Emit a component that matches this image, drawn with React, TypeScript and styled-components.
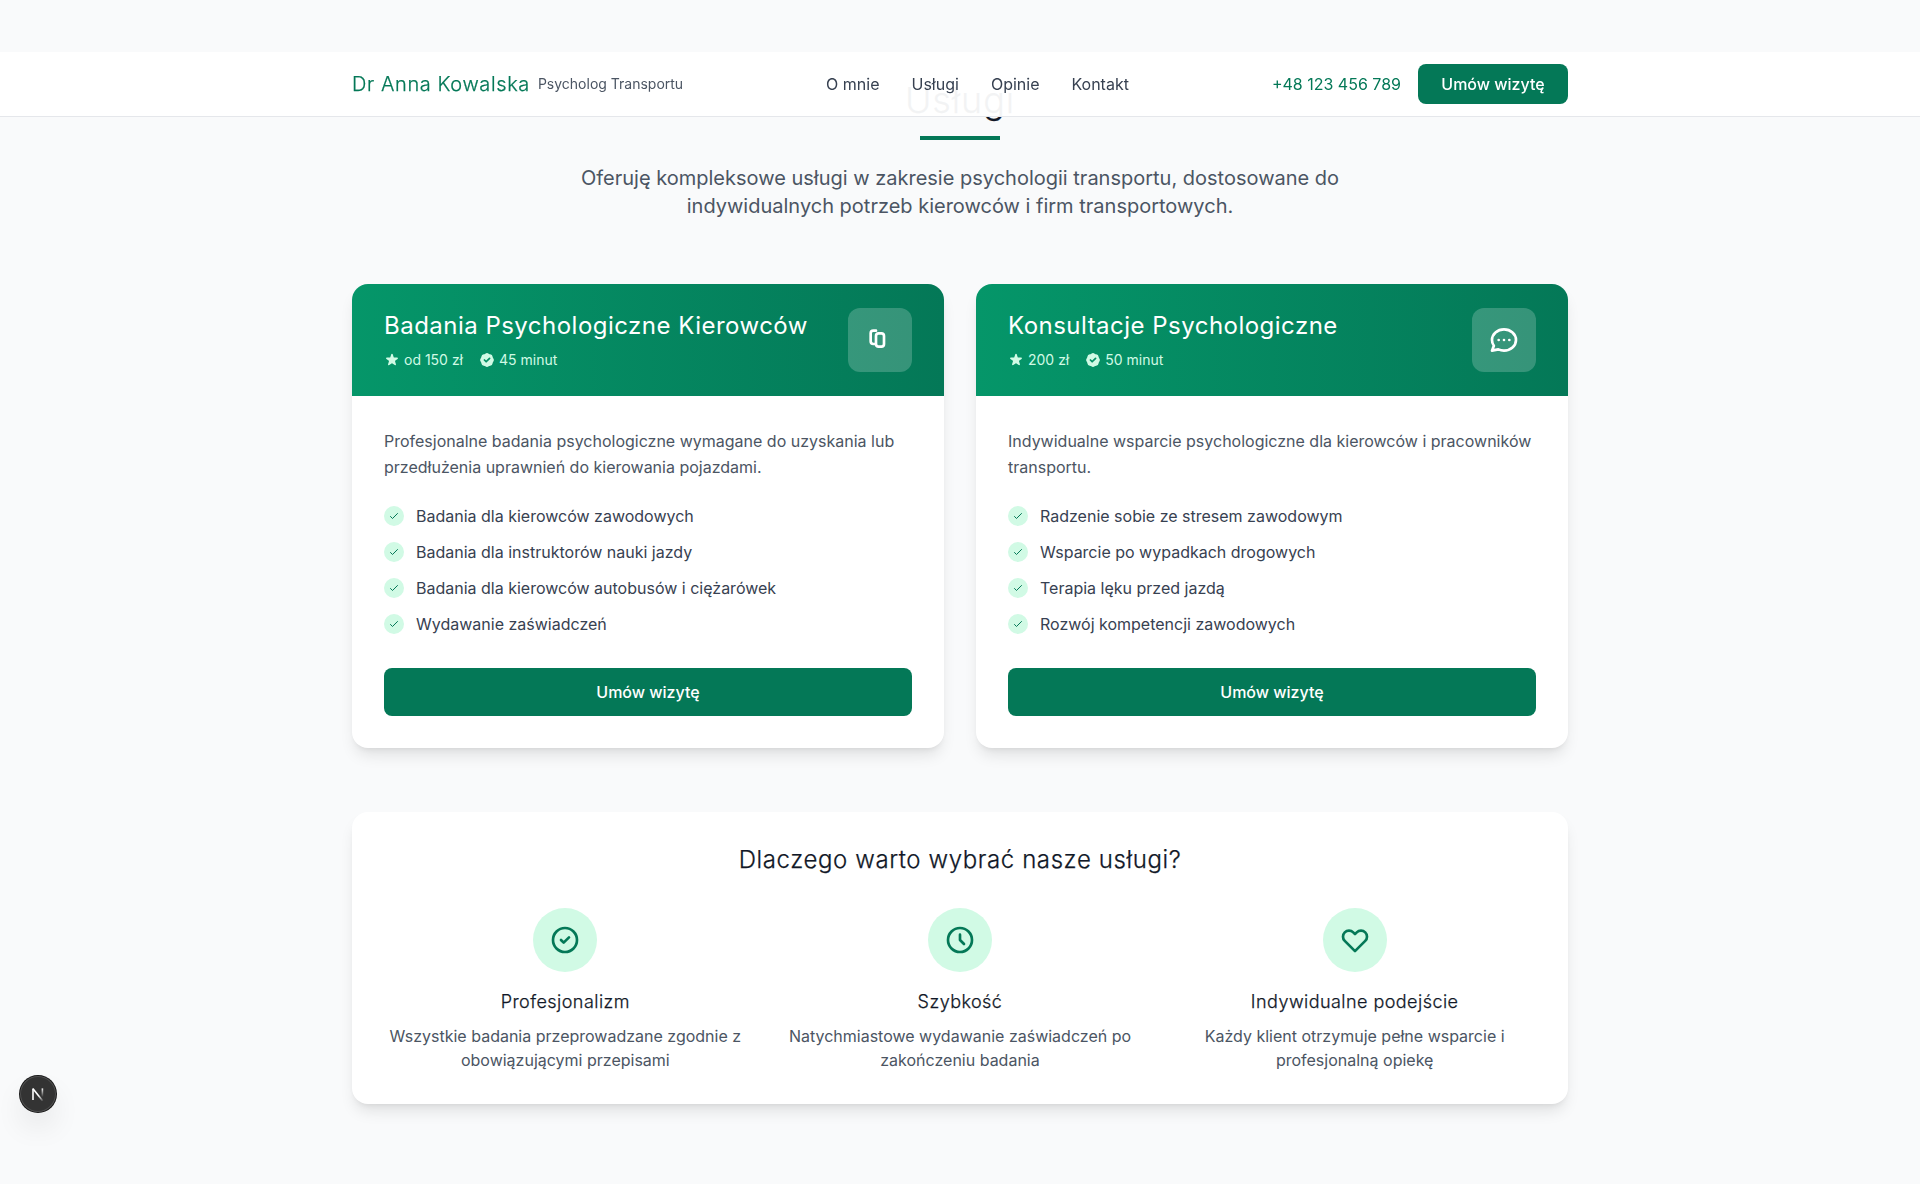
import React from 'react';
import styled, { createGlobalStyle, css } from 'styled-components';

const GlobalStyle = createGlobalStyle`
  *, *::before, *::after { box-sizing: border-box; }
  body {
    margin: 0;
    background: #f9fafb;
    color: #111827;
    font-family: Inter, 'Noto Sans', sans-serif;
    font-size: 16px;
    line-height: 24px;
    overflow: hidden;
  }
  h1, h2, h3, h4, p, ul { margin: 0; padding: 0; font-weight: 400; }
  ul { list-style: none; }
  a { text-decoration: none; color: inherit; }
  svg { display: block; flex-shrink: 0; }
`;

const lightHeading = css`
  font-weight: 300;
  letter-spacing: 0.025em;
  -webkit-text-stroke: 0.25px currentColor;
`;

const Page = styled.div`
  min-height: 1184px;
  padding-top: 80px;
`;

const Container = styled.div`
  width: 1216px;
  margin: 0 auto;
`;

const Header = styled.header`
  position: fixed;
  top: 52px;
  left: 0;
  right: 0;
  z-index: 10;
  background: rgba(255, 255, 255, 0.95);
  border-bottom: 1px solid #e5e7eb;
`;

const HeaderRow = styled(Container)`
  display: flex;
  align-items: center;
  justify-content: space-between;
  height: 64px;
`;

const Brand = styled.a`
  display: flex;
  align-items: center;
  gap: 8px;
`;

const BrandName = styled.span`
  ${lightHeading}
  font-size: 20px;
  line-height: 28px;
  letter-spacing: 0.03em;
  color: #047857;
`;

const BrandRole = styled.span`
  font-size: 14px;
  line-height: 20px;
  color: #4b5563;
`;

const Nav = styled.nav`
  display: flex;
  gap: 32px;
  color: #374151;
`;

const HeaderActions = styled.div`
  display: flex;
  align-items: center;
  gap: 17px;
`;

const Phone = styled.a`
  color: #047857;
`;

const Button = styled.button<{ $wide?: boolean }>`
  display: block;
  width: ${(p) => (p.$wide ? '100%' : '150px')};
  padding: ${(p) => (p.$wide ? '12px 0' : '8px 0')};
  border: 0;
  border-radius: 8px;
  background: #047857;
  color: #fff;
  font: 500 16px/24px Inter, 'Noto Sans', sans-serif;
`;

const Intro = styled.div`
  display: flex;
  flex-direction: column;
  align-items: center;
  margin-bottom: 64px;
  text-align: center;
`;

const SectionTitle = styled.h2`
  ${lightHeading}
  font-size: 36px;
  line-height: 40px;
`;

const Rule = styled.div`
  width: 80px;
  height: 4px;
  margin: 16px 0 24px;
  background: #047857;
`;

const Lead = styled.p`
  max-width: 768px;
  font-size: 20px;
  line-height: 28px;
  color: #4b5563;
`;

const CardGrid = styled.div`
  display: grid;
  grid-template-columns: repeat(2, 1fr);
  gap: 32px;
  margin-bottom: 64px;
`;

const Panel = styled.div`
  border-radius: 16px;
  background: #fff;
  box-shadow: 0 10px 15px -3px rgba(0, 0, 0, 0.1), 0 4px 6px -4px rgba(0, 0, 0, 0.1);
`;

const Card = styled(Panel)`
  overflow: hidden;
`;

const CardHead = styled.div`
  display: flex;
  align-items: center;
  justify-content: space-between;
  padding: 24px 32px;
  background: linear-gradient(to right, #059669, #047857);
`;

const CardTitle = styled.h3`
  margin-bottom: 8px;
  font-size: 24px;
  line-height: 32px;
  letter-spacing: 0.02em;
  color: #fff;
`;

const MetaRow = styled.div`
  display: flex;
  gap: 16px;
  font-size: 14px;
  line-height: 20px;
  color: #d1fae5;
`;

const Meta = styled.span`
  display: flex;
  align-items: center;
  gap: 4px;
`;

const IconTile = styled.div`
  display: flex;
  align-items: center;
  justify-content: center;
  width: 64px;
  height: 64px;
  border-radius: 12px;
  background: rgba(255, 255, 255, 0.2);
  color: #fff;
`;

const CardBody = styled.div`
  padding: 32px;
`;

const Description = styled.p`
  margin-bottom: 24px;
  line-height: 26px;
  color: #4b5563;
`;

const FeatureList = styled.ul`
  display: flex;
  flex-direction: column;
  gap: 12px;
  margin-bottom: 32px;
`;

const Feature = styled.li`
  display: flex;
  align-items: center;
  gap: 12px;
  color: #374151;
`;

const Tick = styled.span`
  display: flex;
  align-items: center;
  justify-content: center;
  width: 20px;
  height: 20px;
  border-radius: 50%;
  background: #d1fae5;
  color: #047857;
`;

const WhyPanel = styled(Panel)`
  padding: 32px;
  text-align: center;
`;

const WhyTitle = styled.h3`
  ${lightHeading}
  margin-bottom: 32px;
  font-size: 24px;
  line-height: 32px;
`;

const WhyGrid = styled.div`
  display: grid;
  grid-template-columns: repeat(3, 1fr);
  gap: 32px;
`;

const Reason = styled.div`
  display: flex;
  flex-direction: column;
  align-items: center;
`;

const ReasonIcon = styled.div`
  display: flex;
  align-items: center;
  justify-content: center;
  width: 64px;
  height: 64px;
  margin-bottom: 16px;
  border-radius: 50%;
  background: #d1fae5;
  color: #047857;
`;

const ReasonTitle = styled.h4`
  ${lightHeading}
  margin-bottom: 8px;
  font-size: 18px;
  line-height: 28px;
`;

const ReasonText = styled.p`
  color: #4b5563;
`;

const DevBadge = styled.div`
  position: fixed;
  left: 20px;
  top: 1076px;
  display: flex;
  align-items: center;
  justify-content: center;
  width: 36px;
  height: 36px;
  border-radius: 50%;
  background: #333;
  box-shadow: 0 0 0 1px #171717, inset 0 0 0 1px rgba(255, 255, 255, 0.14),
    0 16px 32px -8px rgba(0, 0, 0, 0.24);
`;

const OutlineIcon = ({ d, size = 32 }: { d: string; size?: number }) => (
  <svg width={size} height={size} viewBox="0 0 24 24" fill="none" stroke="currentColor" strokeWidth="2" strokeLinecap="round" strokeLinejoin="round">
    <path d={d} />
  </svg>
);

const SolidIcon = ({ d, viewBox = '0 0 20 20' }: { d: string; viewBox?: string }) => (
  <svg width="16" height="16" viewBox={viewBox} fill="currentColor">
    <path fillRule="evenodd" clipRule="evenodd" d={d} />
  </svg>
);

const icons = {
  documents:
    'M9 5H7a2 2 0 00-2 2v6a2 2 0 002 2h2M9 9a2 2 0 012-2h2a2 2 0 012 2v6a2 2 0 01-2 2h-2a2 2 0 01-2-2z',
  chat: 'M8 12h.01M12 12h.01M16 12h.01M21 12c0 4.418-4.03 8-9 8a9.863 9.863 0 01-4.255-.949L3 20l1.395-3.72C3.512 15.042 3 13.574 3 12c0-4.418 4.03-8 9-8s9 3.582 9 8z',
  checkCircle: 'M9 12l2 2 4-4m6 2a9 9 0 11-18 0 9 9 0 0118 0z',
  clock: 'M12 8v4l3 3m6-3a9 9 0 11-18 0 9 9 0 0118 0z',
  heart:
    'M4.318 6.318a4.5 4.5 0 000 6.364L12 20.364l7.682-7.682a4.5 4.5 0 00-6.364-6.364L12 7.636l-1.318-1.318a4.5 4.5 0 00-6.364 0z',
  tick: 'M5 13l4 4L19 7',
  star: 'M9.049 2.927c.3-.921 1.603-.921 1.902 0l1.07 3.292a1 1 0 00.95.69h3.462c.969 0 1.371 1.24.588 1.81l-2.8 2.034a1 1 0 00-.364 1.118l1.07 3.292c.3.921-.755 1.688-1.54 1.118l-2.8-2.034a1 1 0 00-1.175 0l-2.8 2.034c-.784.57-1.838-.197-1.539-1.118l1.07-3.292a1 1 0 00-.364-1.118L2.98 8.72c-.783-.57-.38-1.81.588-1.81h3.461a1 1 0 00.951-.69l1.07-3.292z',
  badge:
    'M6.267 3.455a3.066 3.066 0 001.745-.723 3.066 3.066 0 013.976 0 3.066 3.066 0 001.745.723 3.066 3.066 0 012.812 2.812c.051.643.304 1.254.723 1.745a3.066 3.066 0 010 3.976 3.066 3.066 0 00-.723 1.745 3.066 3.066 0 01-2.812 2.812 3.066 3.066 0 00-1.745.723 3.066 3.066 0 01-3.976 0 3.066 3.066 0 00-1.745-.723 3.066 3.066 0 01-2.812-2.812 3.066 3.066 0 00-.723-1.745 3.066 3.066 0 010-3.976 3.066 3.066 0 00.723-1.745 3.066 3.066 0 012.812-2.812zm7.44 5.252a1 1 0 00-1.414-1.414L9 10.586 7.707 9.293a1 1 0 00-1.414 1.414l2 2a1 1 0 001.414 0l4-4z',
};

const navItems = ['O mnie', 'Usługi', 'Opinie', 'Kontakt'];

const services = [
  {
    title: 'Badania Psychologiczne Kierowców',
    price: 'od 150 zł',
    time: '45 minut',
    icon: icons.documents,
    text: 'Profesjonalne badania psychologiczne wymagane do uzyskania lub przedłużenia uprawnień do kierowania pojazdami.',
    features: [
      'Badania dla kierowców zawodowych',
      'Badania dla instruktorów nauki jazdy',
      'Badania dla kierowców autobusów i ciężarówek',
      'Wydawanie zaświadczeń',
    ],
  },
  {
    title: 'Konsultacje Psychologiczne',
    price: '200 zł',
    time: '50 minut',
    icon: icons.chat,
    text: 'Indywidualne wsparcie psychologiczne dla kierowców i pracowników transportu.',
    features: [
      'Radzenie sobie ze stresem zawodowym',
      'Wsparcie po wypadkach drogowych',
      'Terapia lęku przed jazdą',
      'Rozwój kompetencji zawodowych',
    ],
  },
];

const reasons = [
  { title: 'Profesjonalizm', icon: icons.checkCircle, text: 'Wszystkie badania przeprowadzane zgodnie z obowiązującymi przepisami' },
  { title: 'Szybkość', icon: icons.clock, text: 'Natychmiastowe wydawanie zaświadczeń po zakończeniu badania' },
  { title: 'Indywidualne podejście', icon: icons.heart, text: 'Każdy klient otrzymuje pełne wsparcie i profesjonalną opiekę' },
];

export default function App() {
  return (
    <>
      <GlobalStyle />
      <Header>
        <HeaderRow>
          <Brand>
            <BrandName>Dr Anna Kowalska</BrandName>
            <BrandRole>Psycholog Transportu</BrandRole>
          </Brand>
          <Nav>
            {navItems.map((item) => (
              <a key={item}>{item}</a>
            ))}
          </Nav>
          <HeaderActions>
            <Phone>+48 123 456 789</Phone>
            <Button>Umów wizytę</Button>
          </HeaderActions>
        </HeaderRow>
      </Header>
      <Page>
        <Container>
          <Intro>
            <SectionTitle>Usługi</SectionTitle>
            <Rule />
            <Lead>
              Oferuję kompleksowe usługi w zakresie psychologii transportu, dostosowane do
              indywidualnych potrzeb kierowców i firm transportowych.
            </Lead>
          </Intro>
          <CardGrid>
            {services.map((s) => (
              <Card key={s.title}>
                <CardHead>
                  <div>
                    <CardTitle>{s.title}</CardTitle>
                    <MetaRow>
                      <Meta>
                        <SolidIcon d={icons.star} />
                        {s.price}
                      </Meta>
                      <Meta>
                        <SolidIcon d={icons.badge} viewBox="0.7 0.7 18.6 18.6" />
                        {s.time}
                      </Meta>
                    </MetaRow>
                  </div>
                  <IconTile>
                    <OutlineIcon d={s.icon} />
                  </IconTile>
                </CardHead>
                <CardBody>
                  <Description>{s.text}</Description>
                  <FeatureList>
                    {s.features.map((f) => (
                      <Feature key={f}>
                        <Tick>
                          <OutlineIcon size={12} d={icons.tick} />
                        </Tick>
                        {f}
                      </Feature>
                    ))}
                  </FeatureList>
                  <Button $wide>Umów wizytę</Button>
                </CardBody>
              </Card>
            ))}
          </CardGrid>
          <WhyPanel>
            <WhyTitle>Dlaczego warto wybrać nasze usługi?</WhyTitle>
            <WhyGrid>
              {reasons.map((r) => (
                <Reason key={r.title}>
                  <ReasonIcon>
                    <OutlineIcon d={r.icon} />
                  </ReasonIcon>
                  <ReasonTitle>{r.title}</ReasonTitle>
                  <ReasonText>{r.text}</ReasonText>
                </Reason>
              ))}
            </WhyGrid>
          </WhyPanel>
        </Container>
      </Page>
      <DevBadge>
        <svg width="14" height="14" viewBox="0 0 14 14" fill="none" strokeWidth="1.6">
          <defs>
            <linearGradient id="stem" x1="0" y1="1" x2="0" y2="10" gradientUnits="userSpaceOnUse">
              <stop stopColor="#fff" />
              <stop offset="1" stopColor="#fff" stopOpacity="0" />
            </linearGradient>
            <linearGradient id="diagonal" x1="8" y1="8.5" x2="12.5" y2="14.5" gradientUnits="userSpaceOnUse">
              <stop stopColor="#fff" />
              <stop offset="1" stopColor="#fff" stopOpacity="0" />
            </linearGradient>
          </defs>
          <path d="M2 13V1.6" stroke="#fff" />
          <path d="M2 1.8L11.6 13.8" stroke="url(#diagonal)" />
          <path d="M11.4 1.4V10" stroke="url(#stem)" />
        </svg>
      </DevBadge>
    </>
  );
}
